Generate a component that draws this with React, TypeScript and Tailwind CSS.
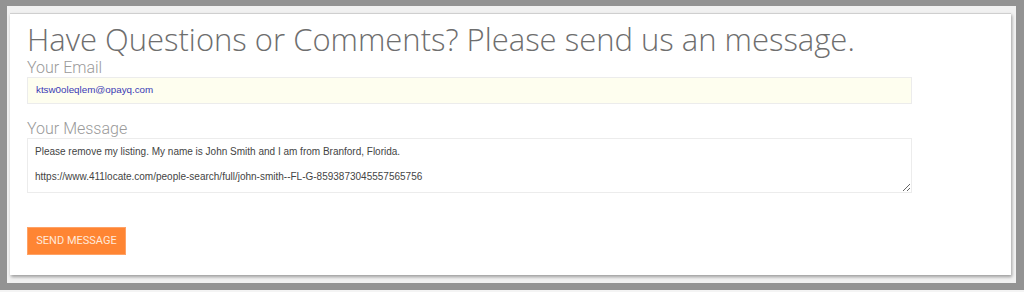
export default function App() {
  return (
    <div className="h-[292px] w-[1024px] bg-[#f4f4f4] overflow-hidden">
      <div className="h-[290px] border-t-[6px] border-l-[7px] border-r-[8px] border-b-[7px] border-[#939393] bg-[#f1f1f1] pt-[7px] pl-[3px] pr-[5px]">
        <div className="h-[262px] bg-white border-t border-[#cfcfcf] shadow-[1px_2px_3px_rgba(0,0,0,0.35)] pl-[17px] pt-[7px]">
          <h1 className="font-['Open_Sans',sans-serif] font-light text-[31px] leading-[36px] text-[#6e6e6e]">
            Have Questions or Comments? Please send us an message.
          </h1>
          <label className="block mt-[1px] font-['Roboto',sans-serif] font-light text-[16px] leading-[19px] text-[#9a9a9a]">
            Your Email
          </label>
          <div className="w-[885px] h-[27px] flex items-center px-[8px] bg-[#fefeef] border border-[#ececec] font-['Liberation_Sans',sans-serif] text-[9.8px] text-[#3a3ab5]">
            ktsw0oleqlem@opayq.com
          </div>
          <label className="block mt-[15px] font-['Roboto',sans-serif] font-light text-[16px] leading-[19px] text-[#9a9a9a]">
            Your Message
          </label>
          <textarea
            readOnly
            className="block w-[885px] h-[55px] px-[7px] pt-[7px] border border-[#ececec] font-['Liberation_Sans',sans-serif] text-[10px] leading-[12.5px] text-[#444] outline-none resize"
            defaultValue={"Please remove my listing. My name is John Smith and I am from Branford, Florida.\n\nhttps://www.411locate.com/people-search/full/john-smith--FL-G-8593873045557565756"}
          />
          <button className="mt-[34px] w-[99px] h-[28px] bg-[#ff8533] border border-[#ffa266] font-['Roboto',sans-serif] text-[11px] text-[#ffe9db]">
            SEND MESSAGE
          </button>
        </div>
      </div>
    </div>
  )
}
